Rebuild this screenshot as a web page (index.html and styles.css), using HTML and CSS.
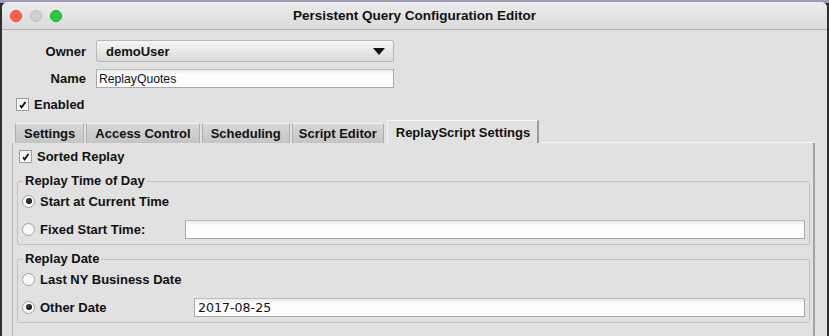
FILE: index.html
```html
<!DOCTYPE html>
<html lang="en">
<head>
  <meta charset="UTF-8" />
  <title>Persistent Query Configuration Editor</title>
  <link rel="stylesheet" href="styles.css">
</head>
<body>

  <div class="window">
    <!-- Title bar -->
    <div class="titlebar">
      <div class="lights">
        <span class="light red"></span>
        <span class="light grey"></span>
        <span class="light green"></span>
      </div>
      <div class="title">Persistent Query Configuration Editor</div>
    </div>

    <div class="content">
      <!-- Owner / Name -->
      <div class="fields">
        <label class="field-label">Owner</label>
        <div class="combo">
          <span>demoUser</span>
          <svg class="combo-arrow" viewBox="0 0 12 7" aria-hidden="true"><path d="M0 0h12L6 7z" /></svg>
        </div>

        <label class="field-label">Name</label>
        <div class="text-field name-field">ReplayQuotes</div>
      </div>

      <div class="check-row enabled-row">
        <span class="checkbox checked">
          <svg viewBox="0 0 12 12" aria-hidden="true"><path d="M3.4 6.8l1.6 2.4L9.2 3.2" /></svg>
        </span>
        Enabled
      </div>

      <!-- Tabs -->
      <div class="tabs">
        <div class="tab">Settings</div>
        <div class="tab">Access Control</div>
        <div class="tab">Scheduling</div>
        <div class="tab narrow">Script Editor</div>
        <div class="tab selected">ReplayScript Settings</div>
        <div class="tab-fill"></div>
      </div>

      <div class="tab-pane">
        <div class="check-row sorted-row">
          <span class="checkbox checked">
            <svg viewBox="0 0 12 12" aria-hidden="true"><path d="M3.4 6.8l1.6 2.4L9.2 3.2" /></svg>
          </span>
          Sorted Replay
        </div>

        <fieldset class="group">
          <legend>Replay Time of Day</legend>
          <div class="radio-row">
            <span class="radio on"></span>
            <span class="radio-text">Start at Current Time</span>
          </div>
          <div class="radio-row">
            <span class="radio"></span>
            <span class="radio-text fixed-label">Fixed Start Time:</span>
            <div class="text-field grow"></div>
          </div>
        </fieldset>

        <fieldset class="group">
          <legend>Replay Date</legend>
          <div class="radio-row">
            <span class="radio"></span>
            <span class="radio-text">Last NY Business Date</span>
          </div>
          <div class="radio-row">
            <span class="radio on"></span>
            <span class="radio-text date-label">Other Date</span>
            <div class="text-field grow date-field">2017-08-25</div>
          </div>
        </fieldset>
      </div>
    </div>
  </div>

</body>
</html>
```

FILE: styles.css
```css
/* Aqua-ish look */
:root {
  --panel: #e1e1e1;
  --field-border: #a9a9a9;
  --tab-border: #aeaeae;
  --text: #111;
}

* {
  box-sizing: border-box;
  font-family: 'Liberation Sans', Arial, sans-serif;
}

html, body {
  height: 100%;
}

body {
  margin: 0;
  padding: 2px 2px 0;
  background: linear-gradient(to bottom, #9c9cb4 0, #9c9cb4 3px, #2f2f2f 3px);
  overflow: hidden;
}

.window {
  height: 100%;
  background: var(--panel);
  border-radius: 6px 6px 0 0;
  display: flex;
  flex-direction: column;
  color: var(--text);
}

/* Title bar */
.titlebar {
  height: 28px;
  flex: none;
  display: flex;
  align-items: center;
  background: linear-gradient(to bottom, #ececec, #dadada);
  border-bottom: 1px solid #b3b3b3;
  border-radius: 6px 6px 0 0;
  position: relative;
}

.lights {
  display: flex;
  gap: 8px;
  padding-left: 8px;
}

.light {
  width: 12px;
  height: 12px;
  border-radius: 50%;
}

.light.red { background: #fe5f57; border: 0.5px solid #e2463f; }
.light.grey { background: #d0d0d0; border: 0.5px solid #bdbdbd; }
.light.green { background: #28c840; border: 0.5px solid #1aab29; }

.title {
  position: absolute;
  left: 0;
  right: 0;
  text-align: center;
  font-weight: 700;
  font-size: 13.5px;
  pointer-events: none;
}

.content {
  flex: 1;
  display: flex;
  flex-direction: column;
  padding: 10px 12px 0 10px;
  min-height: 0;
}

/* Owner / Name */
.fields {
  display: grid;
  grid-template-columns: 74px 298px;
  column-gap: 10px;
  row-gap: 7px;
  align-items: center;
}

.field-label {
  text-align: right;
  font-weight: 700;
  font-size: 13px;
}

.combo {
  height: 22px;
  display: flex;
  align-items: center;
  justify-content: space-between;
  padding: 0 8px 0 9px;
  border: 1px solid #b8b8b8;
  border-radius: 2px;
  background: linear-gradient(to bottom, #f6f6f6, #e4e4e4 60%, #d8d8d8);
  font-weight: 700;
  font-size: 13px;
}

.combo-arrow {
  width: 12px;
  height: 7px;
  fill: #111;
}

.text-field {
  height: 19px;
  padding: 0 3px;
  display: flex;
  align-items: center;
  background: linear-gradient(to bottom, #e9e9e9 0, #fcfcfc 4px, #fff);
  border: 1px solid var(--field-border);
  border-top-color: #bdbdbd;
  font-size: 13px;
}

.name-field {
  padding-left: 2px;
  font-size: 12.2px;
}

.date-field {
  font-family: 'DejaVu Sans', sans-serif;
  font-size: 12.6px;
}

/* Checkboxes */
.check-row {
  display: flex;
  align-items: center;
  gap: 5px;
  font-weight: 700;
  font-size: 13px;
}

.enabled-row {
  margin: 9px 0 0 4px;
}

.checkbox {
  width: 13px;
  height: 13px;
  flex: none;
  background: linear-gradient(to bottom, #f2f2f2, #fff);
  border: 1px solid #9c9c9c;
  display: flex;
}

.checkbox svg {
  width: 11px;
  height: 11px;
  fill: none;
  stroke: #111;
  stroke-width: 2;
}

/* Tabs */
.tabs {
  display: flex;
  align-items: flex-end;
  margin-top: 8px;
  padding-left: 3px;
  height: 23px;
}

.tab {
  height: 20px;
  padding: 0 8px;
  margin-right: 2px;
  display: flex;
  align-items: center;
  font-weight: 700;
  font-size: 13px;
  background: linear-gradient(to bottom, #d8d8d8, #c4c4c4);
  border: 1px solid var(--tab-border);
  border-bottom: none;
  border-top-color: #f2f2f2;
}

.tab.narrow {
  padding: 0 6px;
}

.tab.selected {
  height: 23px;
  padding: 0 7px 0 8px;
  margin-left: 1px;
  background: var(--panel);
  border-color: #f5f5f5 #9c9c9c transparent #f5f5f5;
  border-width: 1px 2px 0 1px;
}

.tab-fill {
  flex: 1;
  border-bottom: 1px solid #f5f5f5;
}

.tab-pane {
  flex: 1;
  border-left: 1px solid #b3b3b3;
  border-right: 2px solid #a4a4a4;
  padding: 6px 3px 0 4px;
}

.sorted-row {
  margin-left: 2px;
}

/* Group boxes */
.group {
  margin: 10px 0 0;
  padding: 0 4px 1px 4px;
  border: 1px solid #c2c2c2;
  border-radius: 2px;
}

.group + .group {
  margin-top: 7px;
}

.group legend {
  padding: 0 2px;
  margin-left: 1px;
  line-height: 14px;
  font-weight: 700;
  font-size: 13px;
}

.radio-row {
  height: 28px;
  display: flex;
  align-items: center;
  font-weight: 700;
  font-size: 13px;
}

.group legend + .radio-row {
  margin-top: -1px;
}

.radio {
  width: 13px;
  height: 13px;
  flex: none;
  border-radius: 50%;
  border: 1px solid #a2a2a2;
  background: linear-gradient(to bottom, #f4f4f4, #fff);
  display: flex;
  align-items: center;
  justify-content: center;
  margin-right: 5px;
}

.radio.on::after {
  content: "";
  width: 6px;
  height: 6px;
  border-radius: 50%;
  background: radial-gradient(circle at 40% 40%, #444, #000);
}

.fixed-label {
  width: 145px;
}

.date-label {
  width: 154px;
}

.text-field.grow {
  flex: 1;
  font-weight: 400;
}
```
